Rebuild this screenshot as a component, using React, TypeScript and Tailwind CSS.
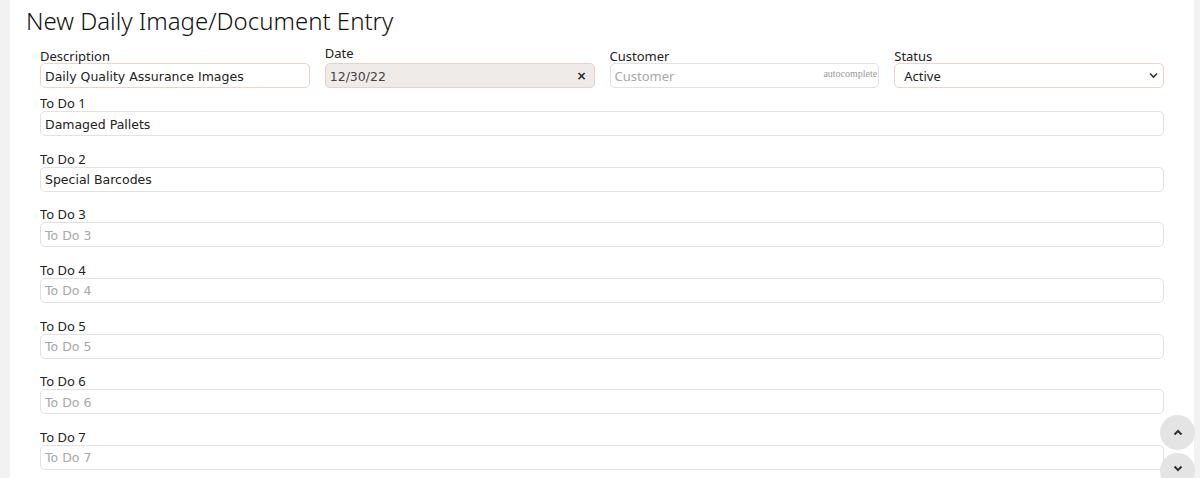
import React from "react";

const todos = [
  { n: 1, value: "Damaged Pallets" },
  { n: 2, value: "Special Barcodes" },
  { n: 3, value: "" },
  { n: 4, value: "" },
  { n: 5, value: "" },
  { n: 6, value: "" },
  { n: 7, value: "" },
];

const labelCls = "block text-[13px] leading-4 text-[#222] font-['Noto_Sans',sans-serif]";
const inputCls =
  "block h-[25px] w-full rounded-[5px] border px-[4px] pt-[1px] text-[12.5px] text-[#222] outline-none font-['DejaVu_Sans',Verdana,sans-serif] placeholder:text-[#a8a8a8]";

const App = () => {
  return (
    <div className="relative flex h-[478px] w-[1200px] overflow-hidden bg-[#f2f2f2]">
      <div className="ml-[10px] h-full w-[1184px] bg-white">
        <h1 className="pl-4 pt-[6px] text-[24px] font-light leading-[30px] text-[#111] font-['Noto_Sans',sans-serif]">
          New Daily Image/Document Entry
        </h1>

        <div className="px-[30px] pt-[12px]">
          <div className="grid grid-cols-4 gap-x-[15px]">
            <div>
              <label className={labelCls}>Description</label>
              <input
                className={`${inputCls} -mt-[1px] border-[#efd2cb]`}
                defaultValue="Daily Quality Assurance Images"
              />
            </div>
            <div className="-mt-[3px]">
              <label className={labelCls}>Date</label>
              <div className="relative mt-[2px]">
                <input
                  className={`${inputCls} border-[#ebcfc8] bg-[#eeebe8] text-[#444]`}
                  defaultValue="12/30/22"
                />
                <span className="absolute right-[8px] top-[4px] text-[12px] font-bold text-[#222] font-['DejaVu_Sans',sans-serif]">
                  ×
                </span>
              </div>
            </div>
            <div>
              <label className={labelCls}>Customer</label>
              <div className="relative -mt-[1px]">
                <input
                  className={`${inputCls} border-[#e2e2e2] text-[13px] font-['Noto_Sans',sans-serif]`}
                  placeholder="Customer"
                />
                <span className="absolute right-[2px] top-[3px] text-[10px] text-[#999] font-['Liberation_Serif',serif]">
                  autocomplete
                </span>
              </div>
            </div>
            <div>
              <label className={labelCls}>Status</label>
              <div className="relative -mt-[1px]">
                <div
                  className={`${inputCls} flex items-center border-[#efd2cb] pl-[9px] pt-[2px] text-[13px] font-['Noto_Sans',sans-serif]`}
                >
                  Active
                </div>
                <svg
                  className="absolute right-[6px] top-[9px]"
                  width="9"
                  height="7"
                  viewBox="0 0 9 7"
                  fill="none"
                  stroke="#333"
                  strokeWidth="1.6"
                >
                  <path d="M1 1.5 L4.5 5 L8 1.5" />
                </svg>
              </div>
            </div>
          </div>

          <div className="mt-[7px] flex flex-col gap-[14.67px]">
            {todos.map((t) => (
              <div key={t.n}>
                <label className={labelCls}>To Do {t.n}</label>
                <input
                  className={`${inputCls} border-[#e2e2e2]`}
                  defaultValue={t.value}
                  placeholder={`To Do ${t.n}`}
                />
              </div>
            ))}
          </div>
        </div>
      </div>

      <button className="absolute left-[1160px] top-[415px] flex h-[35px] w-[35px] items-center justify-center rounded-full bg-[#e4e4e4]">
        <svg width="10" height="7" viewBox="0 0 10 7" fill="none" stroke="#3a3030" strokeWidth="2">
          <path d="M1.5 5.5 L5 2 L8.5 5.5" />
        </svg>
      </button>
      <button className="absolute left-[1160px] top-[453px] flex h-[35px] w-[35px] items-start justify-center rounded-full bg-[#e4e4e4] pt-[12px]">
        <svg width="10" height="7" viewBox="0 0 10 7" fill="none" stroke="#3a3030" strokeWidth="2">
          <path d="M1.5 1.5 L5 5 L8.5 1.5" />
        </svg>
      </button>
    </div>
  );
};

export default App;
